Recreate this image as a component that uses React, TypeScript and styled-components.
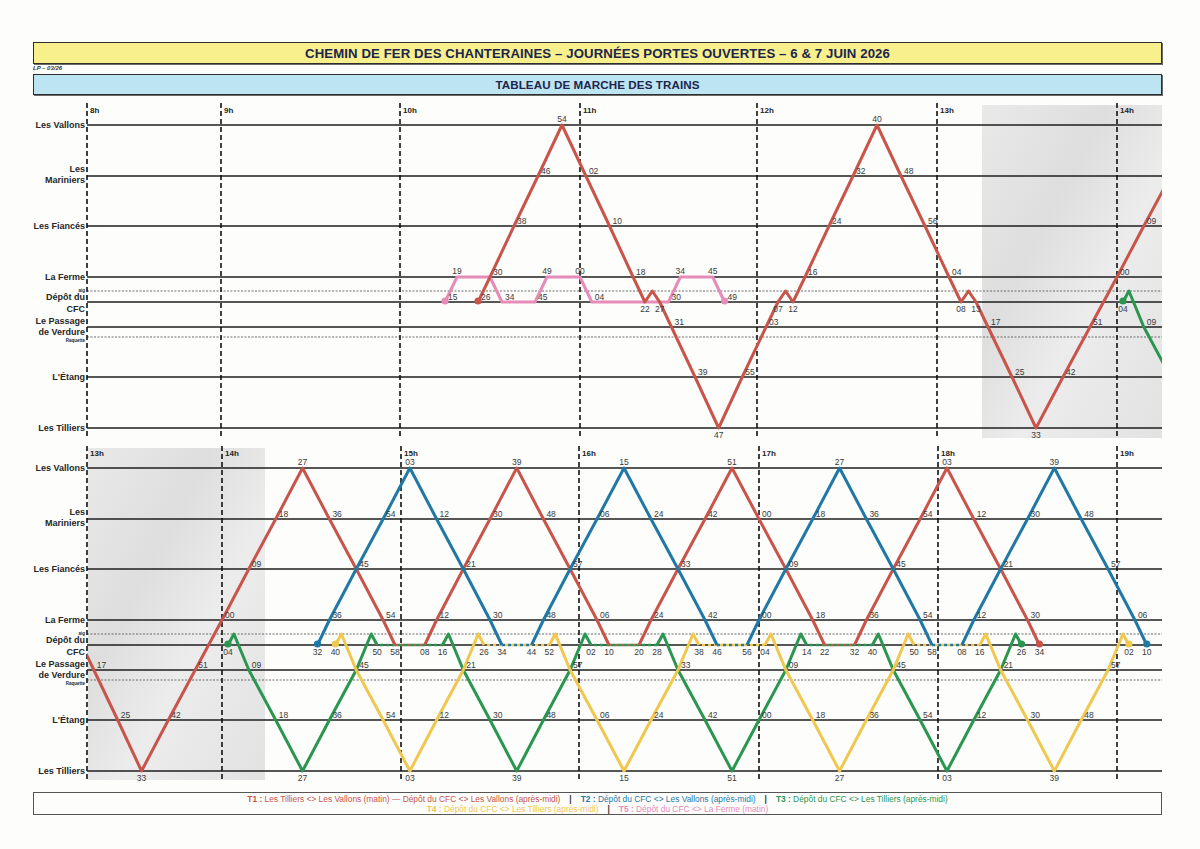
import React from "react";
import styled, { createGlobalStyle } from "styled-components";

const GlobalStyle = createGlobalStyle`
  html, body {
    margin: 0;
    padding: 0;
    background: #fdfdfc;
  }
  body {
    font-family: "Liberation Sans", Arial, sans-serif;
  }
`;

const COLORS = {
  T1: "#c8544a",
  T2: "#1f78a5",
  T3: "#2a9650",
  T4: "#f0c850",
  T5: "#e68cb9",
};

// vertical offset of each row from the "Les Vallons" line
const ROW: Record<string, number> = {
  V: 0,
  M: 51,
  F: 101,
  Fe: 152,
  dot: 166,
  D: 177,
  P: 202,
  R: 212,
  E: 252,
  T: 303,
};

const STATION_ROWS = ["V", "M", "F", "Fe", "D", "P", "E", "T"];
const GUIDE_ROWS = ["dot", "R"];

const STATION_TEXT: [string, number, boolean?][] = [
  ["Les Vallons", 3],
  ["Les", 47],
  ["Mariniers", 58],
  ["Les Fiancés", 104],
  ["La Ferme", 155],
  ["aig", 167, true],
  ["Dépôt du", 175],
  ["CFC", 187],
  ["Le Passage", 199],
  ["de Verdure", 210],
  ["Raquette", 217, true],
  ["L'Étang", 255],
  ["Les Tilliers", 306],
];

type Train = {
  color: string;
  segs: string[];
  startDot?: boolean;
  endDot?: boolean;
  dash?: number;
};

type PanelDef = {
  id: string;
  top: number;
  height: number;
  base: number;
  hours: [string, number][];
  anchors: [number, number][];
  shade: [number, number, number, number];
  trains: Train[];
};

type Stop = { t: number; s: string; lab: string; txt: string };

const defaultLab = (s: string) =>
  s === "V" ? "a" : s === "T" || s === "D" ? "b" : s === "dot" ? "n" : "r";

const parse = (spec: string): Stop[] =>
  spec.split("|").map((item) => {
    const [time, s, lab, txt] = item.trim().split(/\s+/);
    const [h, m] = time.split(":");
    const mm = parseFloat(m);
    return {
      t: Number(h) * 60 + mm,
      s,
      lab: lab ?? defaultLab(s),
      txt: txt ?? String(Math.floor(mm) % 60).padStart(2, "0"),
    };
  });

const makeX = (a: [number, number][]) => (t: number) => {
  if (t <= a[0][0]) return a[0][1] + (t - a[0][0]) * 2.98;
  for (let i = 0; i < a.length - 1; i++) {
    if (t <= a[i + 1][0]) {
      const [t0, x0] = a[i];
      const [t1, x1] = a[i + 1];
      return x0 + ((t - t0) * (x1 - x0)) / (t1 - t0);
    }
  }
  const [tl, xl] = a[a.length - 1];
  return xl + (t - tl) * 2.98;
};

const MORNING: PanelDef = {
  id: "am",
  top: 95,
  height: 345,
  base: 125,
  hours: [
    ["8h", 87],
    ["9h", 221],
    ["10h", 400],
    ["11h", 580],
    ["12h", 757],
    ["13h", 937],
    ["14h", 1117],
  ],
  anchors: [
    [540, 221],
    [600, 400],
    [660, 580],
    [720, 757],
    [780, 937],
    [840, 1117],
  ],
  shade: [982, 105, 180, 333],
  trains: [
    {
      color: COLORS.T5,
      startDot: true,
      endDot: true,
      segs: [
        "10:15 D r|10:19 Fe a|10:30 Fe n|10:34 D r|10:45 D r|10:49 Fe a|11:00 Fe a|11:04 D r|11:30 D r|11:34 Fe a|11:45 Fe a|11:49 D r",
      ],
    },
    {
      color: COLORS.T1,
      startDot: true,
      segs: [
        "10:26 D r|10:30 Fe|10:38 F|10:46 M|10:54 V|11:02 M|11:10 F|11:18 Fe|11:22 D|11:24.5 dot|11:27 D|11:31 P|11:39 E|11:47 T|11:55 E|12:03 P|12:07 D|12:09.5 dot|12:12 D|12:16 Fe|12:24 F|12:32 M|12:40 V|12:48 M|12:56 F|13:04 Fe|13:08 D|13:10.5 dot|13:13 D|13:17 P|13:25 E|13:33 T|13:42 E|13:51 P|14:00 Fe|14:09 F|14:18 M n",
      ],
    },
    {
      color: COLORS.T3,
      startDot: true,
      segs: ["14:02 D b 04|14:04 dot|14:09 P|14:18 E n"],
    },
  ],
};

const AFTERNOON: PanelDef = {
  id: "pm",
  top: 440,
  height: 346,
  base: 468,
  hours: [
    ["13h", 87],
    ["14h", 222],
    ["15h", 401],
    ["16h", 579],
    ["17h", 759],
    ["18h", 938],
    ["19h", 1117],
  ],
  anchors: [
    [840, 222],
    [900, 401],
    [960, 579],
    [1020, 759],
    [1080, 938],
    [1140, 1117],
  ],
  shade: [88, 448, 177, 332],
  trains: [
    {
      color: COLORS.T1,
      endDot: true,
      dash: 0,
      segs: [
        "13:13 D n|13:17 P|13:25 E|13:33 T|13:42 E|13:51 P|14:00 Fe|14:09 F|14:18 M|14:27 V|14:36 M|14:45 F|14:54 Fe|14:58 D",
        "15:08 D|15:12 Fe|15:21 F|15:30 M|15:39 V|15:48 M|15:57 F|16:06 Fe|16:10 D",
        "16:20 D|16:24 Fe|16:33 F|16:42 M|16:51 V|17:00 M|17:09 F|17:18 Fe|17:22 D",
        "17:32 D|17:36 Fe|17:45 F|17:54 M|18:03 V|18:12 M|18:21 F|18:30 Fe|18:34 D",
      ],
    },
    {
      color: COLORS.T2,
      startDot: true,
      endDot: true,
      dash: 0,
      segs: [
        "14:32 D|14:36 Fe|14:45 F n|14:54 M|15:03 V|15:12 M|15:21 F n|15:30 Fe|15:34 D",
        "15:44 D|15:48 Fe|15:57 F n|16:06 M|16:15 V|16:24 M|16:33 F n|16:42 Fe|16:46 D",
        "16:56 D|17:00 Fe|17:09 F n|17:18 M|17:27 V|17:36 M|17:45 F n|17:54 Fe|17:58 D",
        "18:08 D|18:12 Fe|18:21 F n|18:30 M|18:39 V|18:48 M|18:57 F|19:06 Fe|19:10 D",
      ],
    },
    {
      color: COLORS.T3,
      startDot: true,
      endDot: true,
      dash: 3,
      segs: [
        "14:02 D b 04|14:04 dot|14:09 P|14:18 E|14:27 T|14:36 E|14:45 P|14:50 dot|14:52 D b 50",
        "15:14 D b 16|15:16 dot|15:21 P|15:30 E|15:39 T|15:48 E|15:57 P|16:02 dot|16:04 D b 02",
        "16:26 D b 28|16:28 dot|16:33 P|16:42 E|16:51 T|17:00 E|17:09 P|17:14 dot|17:16 D b 14",
        "17:38 D b 40|17:40 dot|17:45 P|17:54 E|18:03 T|18:12 E|18:21 P|18:26 dot|18:28 D b 26",
      ],
    },
    {
      color: COLORS.T4,
      startDot: true,
      endDot: true,
      dash: 3,
      segs: [
        "14:38 D b 40|14:40 dot|14:45 P n|14:54 E|15:03 T|15:12 E|15:21 P n|15:26 dot|15:28 D b 26",
        "15:50 D b 52|15:52 dot|15:57 P n|16:06 E|16:15 T|16:24 E|16:33 P n|16:38 dot|16:40 D b 38",
        "17:02 D b 04|17:04 dot|17:09 P n|17:18 E|17:27 T|17:36 E|17:45 P n|17:50 dot|17:52 D b 50",
        "18:14 D b 16|18:16 dot|18:21 P n|18:30 E|18:39 T|18:48 E|18:57 P|19:02 dot|19:04 D b 02",
      ],
    },
  ],
};

const LEFT = 87;
const RIGHT = 1162;

const Page = styled.div`
  width: 1200px;
  padding-top: 42px;
`;

const Banner = styled.div<{ $bg: string; $h: number; $size: number }>`
  margin: 0 38px 0 33px;
  height: ${({ $h }) => $h}px;
  box-sizing: border-box;
  background: ${({ $bg }) => $bg};
  border: 1px solid #2e2e2e;
  box-shadow: 1px 1px 0 #6a6a6a;
  display: flex;
  align-items: center;
  justify-content: center;
  font-weight: 700;
  font-size: ${({ $size }) => $size}px;
  color: #20244e;
  letter-spacing: 0.1px;
`;

const RefCode = styled.div`
  margin-left: 33px;
  height: 10px;
  line-height: 9px;
  font-size: 6px;
  font-style: italic;
  font-weight: 700;
  color: #333;
`;

const ChartSvg = styled.svg`
  display: block;
  font-family: "Liberation Sans", Arial, sans-serif;
`;

const StationLine = styled.line`
  stroke: #1e1e1e;
  stroke-width: 1.6;
`;

const GuideLine = styled.line`
  stroke: #6b6b6b;
  stroke-width: 1;
  stroke-dasharray: 2 1.5;
`;

const HourLine = styled.line`
  stroke: #111;
  stroke-width: 1.6;
  stroke-dasharray: 5 3;
`;

const HourLabel = styled.text`
  font-size: 8px;
  font-weight: 700;
  fill: #222;
`;

const StationLabel = styled.text<{ $small?: boolean }>`
  font-size: ${({ $small }) => ($small ? 4.5 : 9)}px;
  font-weight: 700;
  fill: #262626;
  text-anchor: end;
`;

const TrainPath = styled.polyline<{ $color: string }>`
  fill: none;
  stroke: ${({ $color }) => $color};
  stroke-width: 3;
  stroke-linejoin: round;
`;

const WaitLine = styled.line<{ $color: string; $offset: number }>`
  stroke: ${({ $color }) => $color};
  stroke-width: 2.6;
  stroke-dasharray: 3 3;
  stroke-dashoffset: ${({ $offset }) => $offset};
`;

const TimeLabel = styled.text`
  font-size: 8.5px;
  fill: #3a3a3a;
`;

const LegendBox = styled.div`
  margin: 6px 38px 0 33px;
  height: 23px;
  box-sizing: border-box;
  border: 1px solid #555;
  padding-top: 1px;
  display: flex;
  flex-direction: column;
  align-items: center;
  font-size: 8.4px;
  line-height: 10px;
`;

const LegendRow = styled.div`
  display: flex;
  gap: 9px;
  white-space: nowrap;
`;

const LegendItem = styled.span<{ $color: string }>`
  color: ${({ $color }) => $color};
  b {
    font-weight: 700;
  }
`;

const Sep = styled.span`
  color: #333;
  font-weight: 700;
`;

const Chart: React.FC<{ def: PanelDef }> = ({ def }) => {
  const x = makeX(def.anchors);
  const y = (s: string) => def.base + ROW[s];
  const clipId = `clip-${def.id}`;
  const shadeId = `shade-${def.id}`;
  const [sx, sy, sw, sh] = def.shade;

  const labels: React.ReactNode[] = [];
  const dots: React.ReactNode[] = [];
  const waits: React.ReactNode[] = [];
  const paths: React.ReactNode[] = [];

  def.trains.forEach((train, ti) => {
    const segs = train.segs.map(parse);
    segs.forEach((stops, si) => {
      paths.push(
        <TrainPath
          key={`p${ti}-${si}`}
          $color={train.color}
          points={stops.map((p) => `${x(p.t)},${y(p.s)}`).join(" ")}
        />
      );
      stops.forEach((p, pi) => {
        const px = x(p.t);
        const py = y(p.s);
        const key = `l${ti}-${si}-${pi}`;
        if (p.lab === "r")
          labels.push(
            <TimeLabel key={key} x={px + 3} y={py - 2}>
              {p.txt}
            </TimeLabel>
          );
        if (p.lab === "a")
          labels.push(
            <TimeLabel key={key} x={px} y={py - 3} textAnchor="middle">
              {p.txt}
            </TimeLabel>
          );
        if (p.lab === "b")
          labels.push(
            <TimeLabel key={key} x={px} y={py + 10} textAnchor="middle">
              {p.txt}
            </TimeLabel>
          );
      });
      const next = segs[si + 1];
      if (next) {
        const a = stops[stops.length - 1];
        const b = next[0];
        waits.push(
          <WaitLine
            key={`w${ti}-${si}`}
            $color={train.color}
            $offset={train.dash ?? 0}
            x1={x(a.t)}
            x2={x(b.t)}
            y1={y("D")}
            y2={y("D")}
          />
        );
      }
    });
    const first = segs[0][0];
    const lastSeg = segs[segs.length - 1];
    const last = lastSeg[lastSeg.length - 1];
    if (train.startDot)
      dots.push(
        <circle key={`s${ti}`} cx={x(first.t)} cy={y(first.s) - 1} r={3.6} fill={train.color} />
      );
    if (train.endDot)
      dots.push(
        <circle key={`e${ti}`} cx={x(last.t)} cy={y(last.s) - 1} r={3.6} fill={train.color} />
      );
  });

  return (
    <ChartSvg width={1200} height={def.height} viewBox={`0 ${def.top} 1200 ${def.height}`}>
      <defs>
        <clipPath id={clipId}>
          <rect x={LEFT} y={def.top} width={RIGHT - LEFT} height={def.height} />
        </clipPath>
        <linearGradient id={shadeId} x1="0" y1="0" x2="1" y2="1">
          <stop offset="0" stopColor="#e9e9e9" />
          <stop offset="0.35" stopColor="#dedede" />
          <stop offset="0.6" stopColor="#ececec" />
          <stop offset="1" stopColor="#e2e2e2" />
        </linearGradient>
      </defs>

      <rect x={sx} y={sy} width={sw} height={sh} fill={`url(#${shadeId})`} />

      {STATION_ROWS.map((r) => (
        <StationLine key={r} x1={LEFT} x2={RIGHT} y1={y(r)} y2={y(r)} />
      ))}
      {GUIDE_ROWS.map((r) => (
        <GuideLine key={r} x1={LEFT} x2={RIGHT} y1={y(r)} y2={y(r)} />
      ))}

      {def.hours.map(([lab, hx]) => (
        <g key={lab}>
          <HourLine x1={hx} x2={hx} y1={def.base - 22} y2={def.base + 313} />
          <HourLabel x={hx + 3} y={def.base - 12}>
            {lab}
          </HourLabel>
        </g>
      ))}

      {STATION_TEXT.map(([text, dy, small]) => (
        <StationLabel key={text} x={85} y={def.base + dy} $small={small}>
          {text}
        </StationLabel>
      ))}

      <g clipPath={`url(#${clipId})`}>
        {waits}
        {paths}
        {dots}
      </g>
      {labels}
    </ChartSvg>
  );
};

const Legend: React.FC = () => (
  <LegendBox>
    <LegendRow>
      <LegendItem $color={COLORS.T1}>
        <b>T1 :</b> Les Tilliers {"<>"} Les Vallons (matin) — Dépôt du CFC {"<>"} Les Vallons (après-midi)
      </LegendItem>
      <Sep>|</Sep>
      <LegendItem $color={COLORS.T2}>
        <b>T2 :</b> Dépôt du CFC {"<>"} Les Vallons (après-midi)
      </LegendItem>
      <Sep>|</Sep>
      <LegendItem $color={COLORS.T3}>
        <b>T3 :</b> Dépôt du CFC {"<>"} Les Tilliers (après-midi)
      </LegendItem>
    </LegendRow>
    <LegendRow>
      <LegendItem $color={COLORS.T4}>
        <b>T4 :</b> Dépôt du CFC {"<>"} Les Tilliers (après-midi)
      </LegendItem>
      <Sep>|</Sep>
      <LegendItem $color={COLORS.T5}>
        <b>T5 :</b> Dépôt du CFC {"<>"} La Ferme (matin)
      </LegendItem>
    </LegendRow>
  </LegendBox>
);

const App: React.FC = () => (
  <>
    <GlobalStyle />
    <Page>
      <Banner $bg="#f7f08c" $h={22} $size={13.2}>
        CHEMIN DE FER DES CHANTERAINES – JOURNÉES PORTES OUVERTES – 6 &amp; 7 JUIN 2026
      </Banner>
      <RefCode>LP – 03/26</RefCode>
      <Banner $bg="#bde5f1" $h={21} $size={11.6}>
        TABLEAU DE MARCHE DES TRAINS
      </Banner>
      <Chart def={MORNING} />
      <Chart def={AFTERNOON} />
      <Legend />
    </Page>
  </>
);

export default App;
